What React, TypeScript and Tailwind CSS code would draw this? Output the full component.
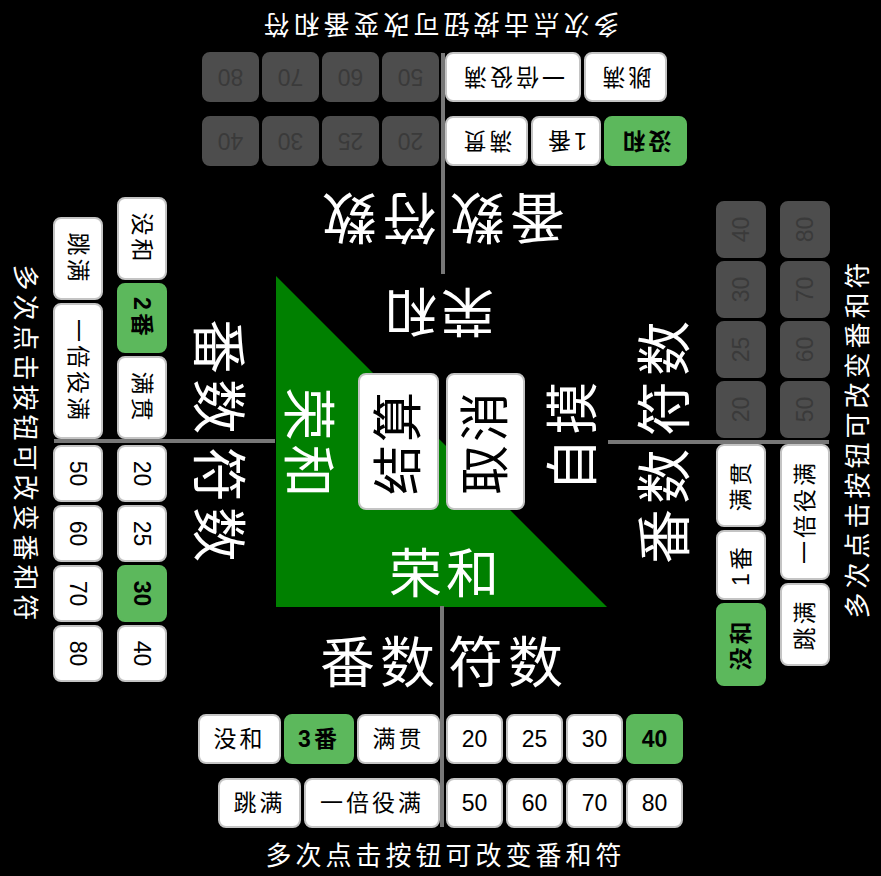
// Riichi scoring pad: four seats around a centre square, each seat is the
// same panel turned to face its player.

const FONT = "font-['Liberation_Sans','Noto_Sans_CJK_SC',sans-serif]";

const HAN_ROW_1 = ["没和", "番", "满贯"];
const HAN_ROW_2 = ["跳满", "一倍役满"];
const FU_ROW_1 = ["20", "25", "30", "40"];
const FU_ROW_2 = ["50", "60", "70", "80"];

type Seat = {
  placement: string;
  han: number;
  fu: string | null;
  disabled?: boolean;
  selectedHan?: string;
};

const SEATS: Seat[] = [
  { placement: "left-[198px] top-[606px]", han: 3, fu: "40" },
  { placement: "left-[500px] top-[308px] -rotate-90", han: 1, fu: null, disabled: true, selectedHan: "没和" },
  { placement: "left-[201px] top-[4px] rotate-180", han: 1, fu: null, disabled: true, selectedHan: "没和" },
  { placement: "left-[-103px] top-[305px] rotate-90", han: 2, fu: "30" },
];

function Key({
  label,
  width,
  selected,
  disabled,
}: {
  label: string;
  width: string;
  selected?: boolean;
  disabled?: boolean;
}) {
  const tone = disabled
    ? "border-[#4d4d4d] bg-[#4d4d4d] text-[#3a3a3a]"
    : selected
      ? "border-[#5cb85c] bg-[#5cb85c] font-bold text-black"
      : "border-[#c4c4c4] bg-white text-black";
  const spacing = /^\d+$/.test(label) ? "" : "tracking-[3px]";
  return (
    <button
      type="button"
      className={`flex h-[50px] items-center justify-center rounded-lg border-2 text-[23px] leading-none ${width} ${tone} ${spacing}`}
    >
      {label}
    </button>
  );
}

function SeatPanel({ seat }: { seat: Seat }) {
  const hanLabel = (label: string) => (label === "番" ? `${seat.han}番` : label);
  const isHanSelected = (label: string) =>
    seat.selectedHan ? label === seat.selectedHan : label === "番";

  return (
    <section className={`absolute flex h-[270px] w-[486px] flex-col ${seat.placement}`}>
      <div className="flex flex-1">
        <div className="flex w-[242px] flex-col items-end">
          <div className="flex h-[108px] items-center pt-[6px] text-[55px] leading-none tracking-[5px] text-white">
            番数
          </div>
          <div className="flex gap-[3px]">
            <Key label={hanLabel(HAN_ROW_1[0])} width="w-[83px]" selected={isHanSelected(HAN_ROW_1[0])} />
            <Key label={hanLabel(HAN_ROW_1[1])} width="w-[70px]" selected={isHanSelected(HAN_ROW_1[1])} />
            <Key label={hanLabel(HAN_ROW_1[2])} width="w-[83px]" />
          </div>
          <div className="mt-[14px] flex gap-[3px]">
            <Key label={HAN_ROW_2[0]} width="w-[83px]" />
            <Key label={HAN_ROW_2[1]} width="w-[136px]" />
          </div>
        </div>
        <div className="h-[221px] w-1 bg-[#777]" />
        <div className="flex w-[240px] flex-col items-start pl-[2px]">
          <div className="flex h-[108px] items-center pl-[2px] pt-[6px] text-[55px] leading-none tracking-[5px] text-white">
            符数
          </div>
          <div className="flex gap-[3px]">
            {FU_ROW_1.map((fu) => (
              <Key key={fu} label={fu} width="w-[57px]" selected={seat.fu === fu} disabled={seat.disabled} />
            ))}
          </div>
          <div className="mt-[14px] flex gap-[3px]">
            {FU_ROW_2.map((fu) => (
              <Key key={fu} label={fu} width="w-[57px]" disabled={seat.disabled} />
            ))}
          </div>
        </div>
      </div>
      <p className="pb-[2px] pl-[9px] text-center text-[26px] leading-[36px] tracking-[4px] text-white">
        多次点击按钮可改变番和符
      </p>
    </section>
  );
}

function WinLabel({ className, children }: { className: string; children: string }) {
  return (
    <div className={`absolute whitespace-nowrap text-[53px] leading-none tracking-[4px] text-white ${className}`}>
      {children}
    </div>
  );
}

function ActionKey({ label, width }: { label: string; width: string }) {
  return (
    <button
      type="button"
      className={`flex h-[137px] items-center justify-center rounded-lg border-2 border-[#c4c4c4] bg-white text-[50px] tracking-[3px] text-black ${width}`}
    >
      <span className="-rotate-90 whitespace-nowrap leading-none">{label}</span>
    </button>
  );
}

export default function App() {
  return (
    <div className={`relative h-[876px] w-[881px] overflow-hidden bg-black ${FONT}`}>
      {/* centre square with the ron triangle */}
      <div className="absolute left-[276px] top-[276px] h-[331px] w-[331px]">
        <div className="h-full w-full bg-[#008000] [clip-path:polygon(0_0,0_100%,100%_100%)]" />
        <WinLabel className="bottom-[6px] left-[113px]">荣和</WinLabel>
        <WinLabel className="left-[-26px] top-[142px] rotate-90">荣和</WinLabel>
        <WinLabel className="left-[104px] top-[8px] rotate-180">荣和</WinLabel>
        <WinLabel className="left-[240px] top-[132px] -rotate-90">自摸</WinLabel>
        <div className="absolute left-[82px] top-[97px] flex gap-[7px]">
          <ActionKey label="结算" width="w-[81px]" />
          <ActionKey label="取消" width="w-[79px]" />
        </div>
      </div>
      {SEATS.map((seat) => (
        <SeatPanel key={seat.placement} seat={seat} />
      ))}
    </div>
  );
}
